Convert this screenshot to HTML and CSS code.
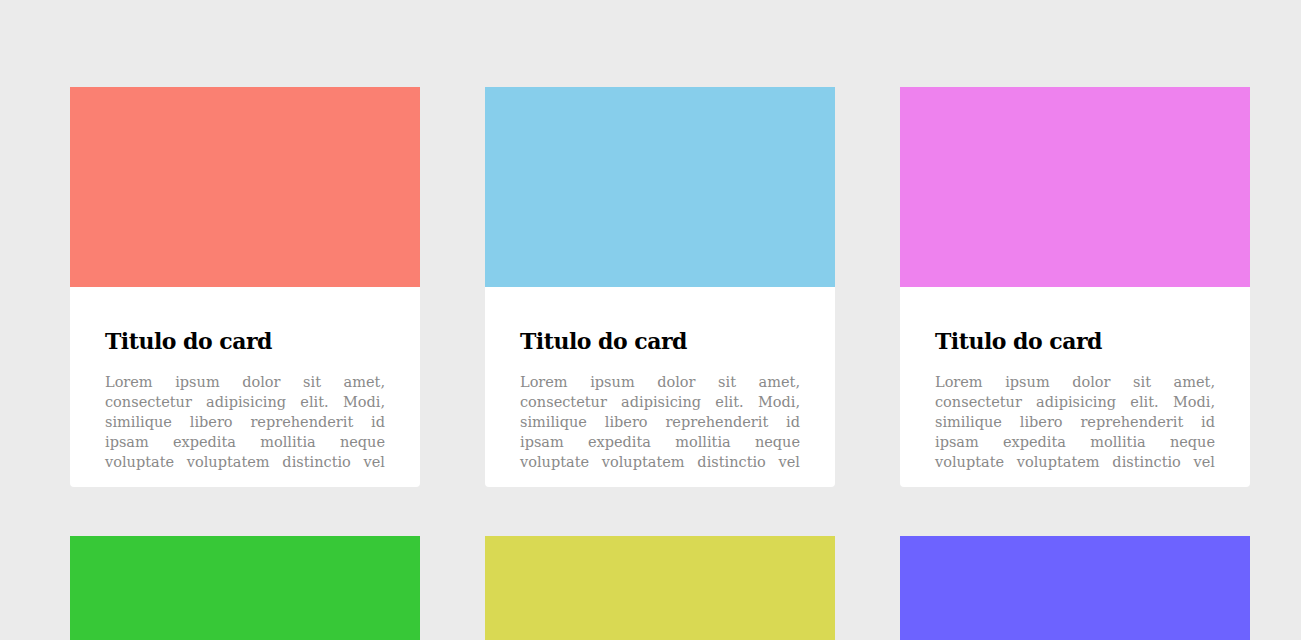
FILE: index.html
```html
<!DOCTYPE html>
<html lang="pt">
<head>
<meta charset="utf-8">
<title>Cards</title>
<link rel="stylesheet" href="styles.css">
</head>
<body>
<main class="grid">
  <article class="card"><div class="card-img salmon"></div><div class="card-body"><h2 class="card-title">Titulo do card</h2><p class="card-text">Lorem ipsum dolor sit amet, consectetur adipisicing elit. Modi, similique libero reprehenderit id ipsam expedita mollitia neque voluptate voluptatem distinctio vel</p></div></article>
  <article class="card"><div class="card-img sky"></div><div class="card-body"><h2 class="card-title">Titulo do card</h2><p class="card-text">Lorem ipsum dolor sit amet, consectetur adipisicing elit. Modi, similique libero reprehenderit id ipsam expedita mollitia neque voluptate voluptatem distinctio vel</p></div></article>
  <article class="card"><div class="card-img violet"></div><div class="card-body"><h2 class="card-title">Titulo do card</h2><p class="card-text">Lorem ipsum dolor sit amet, consectetur adipisicing elit. Modi, similique libero reprehenderit id ipsam expedita mollitia neque voluptate voluptatem distinctio vel</p></div></article>
  <article class="card"><div class="card-img lime"></div><div class="card-body"><h2 class="card-title">Titulo do card</h2><p class="card-text">Lorem ipsum dolor sit amet, consectetur adipisicing elit. Modi, similique libero reprehenderit id ipsam expedita mollitia neque voluptate voluptatem distinctio vel</p></div></article>
  <article class="card"><div class="card-img yellow"></div><div class="card-body"><h2 class="card-title">Titulo do card</h2><p class="card-text">Lorem ipsum dolor sit amet, consectetur adipisicing elit. Modi, similique libero reprehenderit id ipsam expedita mollitia neque voluptate voluptatem distinctio vel</p></div></article>
  <article class="card"><div class="card-img blue"></div><div class="card-body"><h2 class="card-title">Titulo do card</h2><p class="card-text">Lorem ipsum dolor sit amet, consectetur adipisicing elit. Modi, similique libero reprehenderit id ipsam expedita mollitia neque voluptate voluptatem distinctio vel</p></div></article>
</main>
</body>
</html>
```

FILE: styles.css
```css
* { box-sizing: border-box; }
html, body { margin: 0; }
body {
  background: #ebebeb;
  font-family: "DejaVu Serif", "Liberation Serif", serif;
}
.grid {
  display: grid;
  grid-template-columns: repeat(3, 350px);
  column-gap: 65px;
  row-gap: 49px;
  padding: 87px 0 0 70px;
}
.card {
  width: 350px;
  height: 400px;
  background: #fff;
  border-radius: 0 0 4px 4px;
  overflow: hidden;
  display: flex;
  flex-direction: column;
}
.card-img { height: 200px; flex: none; }
.salmon { background: #fa8072; }
.sky { background: #87ceeb; }
.violet { background: #ee82ee; }
.lime { background: #37c837; }
.yellow { background: #d9d953; }
.blue { background: #6d63ff; }
.card-body {
  padding: 37px 35px 0;
}
.card-title {
  margin: 0;
  font-size: 22px;
  line-height: 34px;
  font-weight: bold;
  color: #000;
  letter-spacing: -0.5px;
}
.card-text {
  margin: 14px 0 0;
  font-size: 14.5px;
  line-height: 20px;
  color: #8a8a8a;
  text-align: justify;
  text-align-last: justify;
}
```
